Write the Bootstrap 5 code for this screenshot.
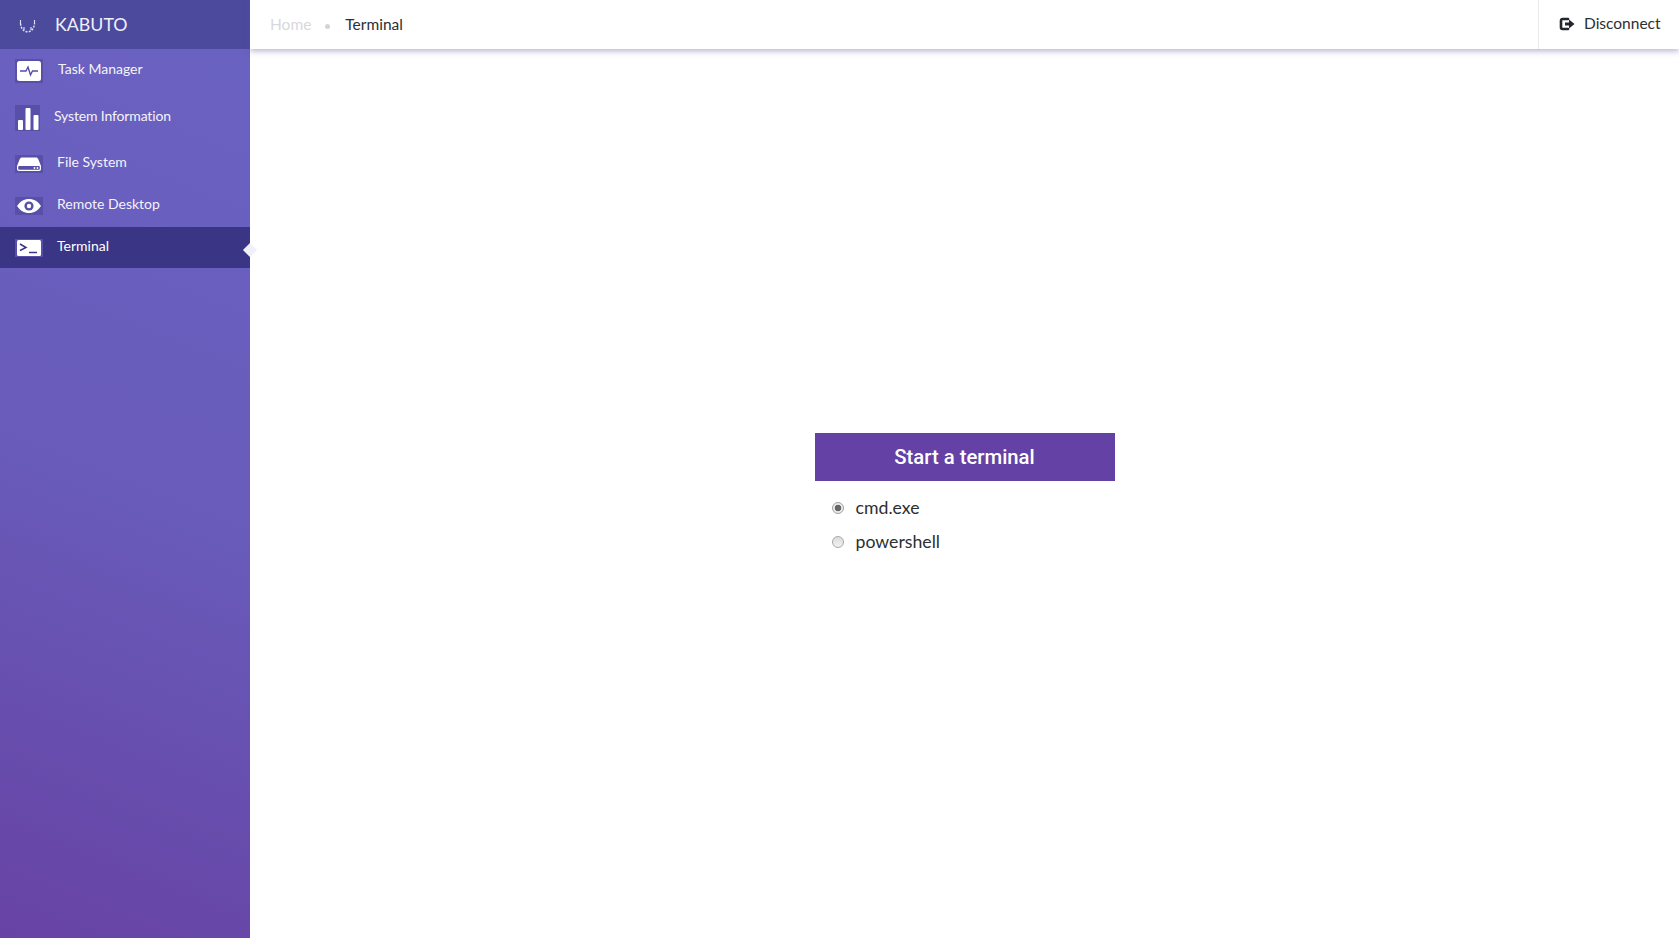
<!DOCTYPE html>
<html lang="en">
<head>
<meta charset="utf-8">
<title>Kabuto</title>
<link href="https://cdn.jsdelivr.net/npm/bootstrap@5.3.0/dist/css/bootstrap.min.css" rel="stylesheet">
<style>
html,body{height:100%}
body{font-family:"Lato","Liberation Sans",sans-serif;color:#2b2f33;background:#fff;overflow:hidden}
.shell{height:938px}
.side{width:250px;flex:none;background:linear-gradient(22deg,#6743a5 0%,#674eae 22%,#695cbb 50%,#6a62c1 100%)}
.brand{height:49px;background:#4b4a9d;color:#f1f0fa;font-size:17.800px;padding-left:19px}
.brand svg{margin-right:19px;margin-top:4px}
.side-link{color:#f4f3fb;font-size:14px;padding:0 0 0 15px;position:relative}
.side-link:hover,.side-link:focus{color:#fff}
.h-a{height:44px}.h-b{height:50px}.h-c{height:42px}.h-d{height:41px}
.side-link.active{background:#3a3585;color:#fff}
.side-link.active::after{content:"";position:absolute;right:-5px;top:18px;width:10px;height:10px;background:#f0f0f8;transform:rotate(45deg)}
.tick{width:28px;flex:none;background:#574fa8;display:flex;align-items:center;justify-content:center;margin-right:15px}
.tick-a{height:24px}.tick-b{height:26px;width:25px}.tick-c{height:18px}
.lab-a{margin-top:-5px}
.lab-b{margin-top:-5px;margin-left:-1px;letter-spacing:-.15px}
.lab-c{margin-top:-5px;margin-left:-1px}
.lab-d{margin-top:-4px;margin-left:-1px}
.top{height:49px;box-shadow:0 2px 6px rgba(90,85,150,.45);position:relative;z-index:2}
.crumbs{margin:0 0 0 20px;font-size:15.500px;--bs-breadcrumb-margin-bottom:0}
.crumbs .breadcrumb-item+.breadcrumb-item{padding-left:34px;position:relative}
.crumbs .breadcrumb-item+.breadcrumb-item::before{content:"";position:absolute;left:14px;top:11px;width:5px;height:5px;border-radius:50%;background:#d4d4d8;padding:0;float:none}
.crumbs a{color:#d8d8dc;text-decoration:none}
.crumbs .active{color:#2b2f33}
.leave{border-left:1px solid #e9e9ee;width:141px;font-size:15.500px;color:#2b2f33;padding-left:20px;text-decoration:none;height:49px}
.leave svg{margin-right:9px;margin-top:-2px}
.leave span{margin-top:-2px}
.panel{width:300px;padding-top:6px}
.start-btn{background:#6441a5;color:#fff;font-family:Roboto,sans-serif;font-weight:500;font-size:20.300px;height:48px;width:300px;border:0;border-radius:0;padding:0}
.start-btn:hover{background:#6441a5;color:#fff}
.pick{font-size:17.700px;padding-left:40px;min-height:0;margin:0;height:34px;display:flex;align-items:center}
.pick .form-check-input{appearance:none;width:12px;height:12px;margin:-2px 0 0 -23px;float:none;flex:none;border:1px solid #a8a8a8;background:linear-gradient(#dcdcdc,#f2f2f2);box-shadow:none}
.pick .form-check-input:checked{background:radial-gradient(circle,#666 0 3px,#ececec 3.6px);border-color:#a0a0a0}
.pick .form-check-label{margin-left:12px}
.panel-list{padding-top:10.500px}
</style>
</head>
<body>
<div class="d-flex shell">
  <aside class="side d-flex flex-column">
    <div class="brand d-flex align-items-center">
      <svg width="17" height="13" viewBox="0 0 17 13" aria-hidden="true"><path d="M1.500 3.500C2 9 5 11.800 8.500 11.800S15 9 15.500 3.500" fill="none" stroke="#e4e2f4" stroke-width="1.500" stroke-dasharray="2 1.300"/><path d="M1.500 0v4M15.500 0v4M5 7v3M12 7v3" stroke="#e4e2f4" stroke-width="1.100"/></svg>
      <span>KABUTO</span>
    </div>
    <nav class="nav flex-column">
      <a class="nav-link side-link h-a d-flex align-items-center" href="#">
        <span class="tick tick-a"><svg width="24" height="20" viewBox="0 0 24 20"><rect width="24" height="20" rx="2.500" fill="#fff"/><path d="M3 10h6l2-4 2.500 8 2-4h5.500" fill="none" stroke="#544ca6" stroke-width="1.400"/></svg></span>
        <span class="lab-a">Task Manager</span>
      </a>
      <a class="nav-link side-link h-b d-flex align-items-center" href="#">
        <span class="tick tick-b"><svg width="22" height="23" viewBox="0 0 22 23"><rect x="1" y="13" width="5" height="10" rx="1" fill="#fff"/><rect x="8.500" y="1" width="5" height="22" rx="1" fill="#fff"/><rect x="16.500" y="8" width="5" height="15" rx="1" fill="#fff"/></svg></span>
        <span class="lab-b">System Information</span>
      </a>
      <a class="nav-link side-link h-c d-flex align-items-center" href="#">
        <span class="tick tick-c"><svg width="24" height="14" viewBox="0 0 24 14"><path d="M5 .5h14c1 0 1.800.6 2.200 1.500L24 9v3a2 2 0 0 1-2 2H2a2 2 0 0 1-2-2V9l2.800-7C3.200 1.100 4 .5 5 .5z" fill="#fff"/><rect x="1.200" y="9" width="21.600" height="3.800" rx="1" fill="#574fa8"/><circle cx="17.500" cy="11" r=".9" fill="#fff"/><circle cx="20.500" cy="11" r=".9" fill="#fff"/></svg></span>
        <span class="lab-c">File System</span>
      </a>
      <a class="nav-link side-link h-c d-flex align-items-center" href="#">
        <span class="tick tick-c"><svg width="24" height="14" viewBox="0 0 24 14"><path d="M0 7C3 2.500 7 0 12 0s9 2.500 12 7c-3 4.500-7 7-12 7S3 11.500 0 7z" fill="#fff"/><circle cx="12" cy="7" r="4.600" fill="#574fa8"/><circle cx="12" cy="7" r="2.200" fill="#fff"/></svg></span>
        <span class="lab-c">Remote Desktop</span>
      </a>
      <a class="nav-link side-link active h-d d-flex align-items-center" href="#">
        <span class="tick tick-c"><svg width="24" height="16" viewBox="0 0 24 16"><rect width="24" height="16" rx="1.500" fill="#fff"/><path d="M3 4l6 3.500L3 10.500" fill="none" stroke="#3a3585" stroke-width="1.500"/><path d="M12 12.500h8" stroke="#3a3585" stroke-width="1.500"/></svg></span>
        <span class="lab-d">Terminal</span>
      </a>
    </nav>
  </aside>
  <div class="flex-grow-1 d-flex flex-column">
    <header class="top d-flex align-items-center justify-content-between bg-white">
      <ol class="breadcrumb crumbs">
        <li class="breadcrumb-item"><a href="#">Home</a></li>
        <li class="breadcrumb-item active" aria-current="page">Terminal</li>
      </ol>
      <a class="leave d-flex align-items-center" href="#">
        <svg width="16" height="14" viewBox="0 0 16 14"><path d="M9 2H3.500C2.700 2 2 2.700 2 3.500v7C2 11.300 2.700 12 3.500 12H9" fill="none" stroke="#23272b" stroke-width="2.600" stroke-linecap="round"/><path d="M6 5.500h4V2.500L15.500 7 10 11.500v-3H6z" fill="#23272b"/></svg>
        <span>Disconnect</span>
      </a>
    </header>
    <main class="flex-grow-1 d-flex align-items-center justify-content-center">
      <div class="panel">
        <button type="button" class="btn start-btn">Start a terminal</button>
        <div class="panel-list">
          <div class="form-check pick"><input class="form-check-input" type="radio" name="shell" id="s1" checked><label class="form-check-label" for="s1">cmd.exe</label></div>
          <div class="form-check pick"><input class="form-check-input" type="radio" name="shell" id="s2"><label class="form-check-label" for="s2">powershell</label></div>
        </div>
      </div>
    </main>
  </div>
</div>
<script src="https://cdn.jsdelivr.net/npm/bootstrap@5.3.0/dist/js/bootstrap.bundle.min.js"></script>
</body>
</html>
